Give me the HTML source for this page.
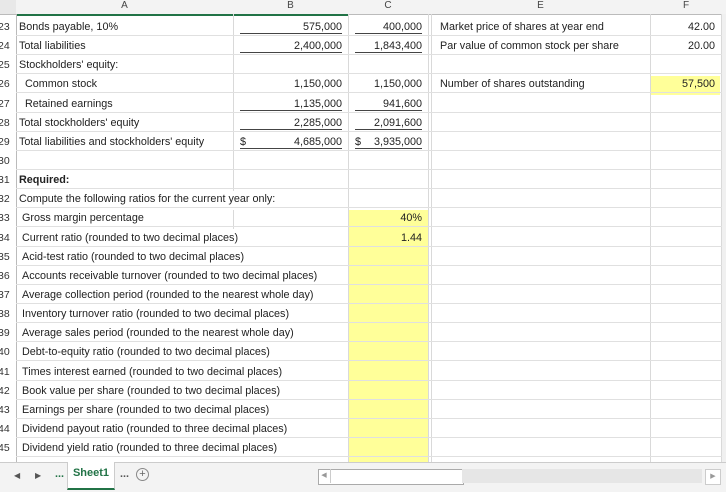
<!DOCTYPE html>
<html><head><style>
body{margin:0;width:726px;height:491px;overflow:hidden;background:#fff;font-family:"Liberation Sans",sans-serif;font-size:10.8px;color:#222;position:relative}
.a{position:absolute;white-space:nowrap}
.h{position:absolute;top:0;height:14px;background:#f3f3f3;border-bottom:1px solid #bbb;font-size:10px;color:#444;text-align:center;line-height:12px}
.v{position:absolute;width:1px;background:#d9d9d9}
.hl{position:absolute;height:1px;background:#e0e0e0;left:16px;width:706px}
.rn{position:absolute;left:-2px;width:15px;font-size:10.5px;color:#333}
.r{text-align:right}
.u{border-bottom:1px solid #444;line-height:12px}
</style></head><body>
<div class="h" style="left:0;width:726px"></div>
<div class="a" style="left:0;top:0;width:16px;height:14px;background:#e8e8e8"></div>
<div class="h" style="left:16px;width:217px;border-bottom:2px solid #217346">A</div>
<div class="h" style="left:233px;width:115px;border-bottom:2px solid #217346">B</div>
<div class="h" style="left:348px;width:80px">C</div>
<div class="h" style="left:431px;width:219px">E</div>
<div class="h" style="left:650px;width:72px">F</div>
<div class="a" style="left:349px;top:210px;width:79px;height:252px;background:#ffff99"></div>
<div class="a" style="left:651px;top:76px;width:69px;height:19px;background:#ffff99"></div>
<div class="v" style="left:16px;top:14px;height:448px;background:#bbb"></div>
<div class="v" style="left:233px;top:14px;height:177px"></div>
<div class="v" style="left:233px;top:210px;height:19px"></div>
<div class="v" style="left:348px;top:14px;height:448px"></div>
<div class="v" style="left:428px;top:14px;height:448px"></div>
<div class="v" style="left:431px;top:14px;height:448px"></div>
<div class="v" style="left:650px;top:14px;height:448px"></div>
<div class="v" style="left:721px;top:14px;height:448px"></div>
<div class="a" style="left:722px;top:14px;width:4px;height:448px;background:#f0f0f0"></div>
<div id="g"></div>
<script>
var rows=[["23","Bonds payable, 10%","575,000","400,000","Market price of shares at year end","42.00"],
["24","Total liabilities","2,400,000","1,843,400","Par value of common stock per share","20.00"],
["25","Stockholders' equity:","","","",""],
["26","&nbsp;&nbsp;Common stock","1,150,000","1,150,000","Number of shares outstanding","57,500"],
["27","&nbsp;&nbsp;Retained earnings","1,135,000","941,600","",""],
["28","Total stockholders' equity","2,285,000","2,091,600","",""],
["29","Total liabilities and stockholders' equity","4,685,000","3,935,000","",""],
["30","","","","",""],
["31","<b>Required:</b>","","","",""],
["32","Compute the following ratios for the current year only:","","","",""],
["33","&nbsp;Gross margin percentage","","40%","",""],
["34","&nbsp;Current ratio (rounded to two decimal places)","","1.44","",""],
["35","&nbsp;Acid-test ratio (rounded to two decimal places)","","","",""],
["36","&nbsp;Accounts receivable turnover (rounded to two decimal places)","","","",""],
["37","&nbsp;Average collection period (rounded to the nearest whole day)","","","",""],
["38","&nbsp;Inventory turnover ratio (rounded to two decimal places)","","","",""],
["39","&nbsp;Average sales period (rounded to the nearest whole day)","","","",""],
["40","&nbsp;Debt-to-equity ratio (rounded to two decimal places)","","","",""],
["41","&nbsp;Times interest earned (rounded to two decimal places)","","","",""],
["42","&nbsp;Book value per share (rounded to two decimal places)","","","",""],
["43","&nbsp;Earnings per share (rounded to two decimal places)","","","",""],
["44","&nbsp;Dividend payout ratio (rounded to three decimal places)","","","",""],
["45","&nbsp;Dividend yield ratio (rounded to three decimal places)","","","",""],
["46","","","","",""]];
var h="",ul={0:1,1:1,4:1,5:1,6:1};
rows.forEach(function(r,i){var t=17+i*19.14,y=t+4;
h+='<div class="hl" style="top:'+(t+18)+'px"></div>';
h+='<div class="rn" style="top:'+y+'px">'+r[0]+'</div>';
h+='<div class="a" style="left:19px;top:'+y+'px">'+r[1]+'</div>';
var u=ul[i]?'u':'';
if(r[2])h+='<div class="a r '+u+'" style="left:240px;width:102px;top:'+y+'px">'+r[2]+'</div>';
if(r[3])h+='<div class="a r '+u+'" style="left:355px;width:67px;top:'+y+'px">'+r[3]+'</div>';
if(i==6){h+='<div class="a" style="left:240px;top:'+y+'px">$</div><div class="a" style="left:355px;top:'+y+'px">$</div>';}
if(r[4])h+='<div class="a" style="left:440px;top:'+y+'px">'+r[4]+'</div>';
if(r[5])h+='<div class="a r" style="left:655px;width:60px;top:'+y+'px">'+r[5]+'</div>';
});
document.getElementById('g').innerHTML=h;
</script>
<div class="a" style="left:0;top:462px;width:726px;height:29px;background:#f3f3f3;border-top:1px solid #ccc"></div>
<div class="a" style="left:14px;top:471px;color:#555;font-size:8px">◀</div>
<div class="a" style="left:35px;top:471px;color:#555;font-size:8px">▶</div>
<div class="a" style="left:55px;top:468px;color:#217346;font-weight:bold">...</div>
<div class="a" style="left:67px;top:462px;width:46px;height:26px;background:#fff;border-bottom:2px solid #217346;border-left:1px solid #ccc;border-right:1px solid #ccc;text-align:center;line-height:22px;color:#217346;font-weight:bold;font-size:11px">Sheet1</div>
<div class="a" style="left:120px;top:468px;color:#555;font-weight:bold">...</div>
<div class="a" style="left:136px;top:468px;width:11px;height:11px;border:1px solid #888;border-radius:50%;text-align:center;line-height:11px;color:#666;font-size:11px">+</div>
<div class="a" style="left:318px;top:469px;width:144px;height:14px;background:#fff;border:1px solid #aaa"></div>
<div class="a" style="left:318px;top:469px;width:12px;height:14px;border-right:1px solid #ccc;color:#999;font-size:7px;text-align:center;line-height:14px">◀</div>
<div class="a" style="left:462px;top:469px;width:240px;height:14px;background:#e6e6e6"></div>
<div class="a" style="left:705px;top:469px;width:14px;height:14px;background:#fff;border:1px solid #ccc;color:#999;font-size:7px;text-align:center;line-height:14px">▶</div>
</body></html>
